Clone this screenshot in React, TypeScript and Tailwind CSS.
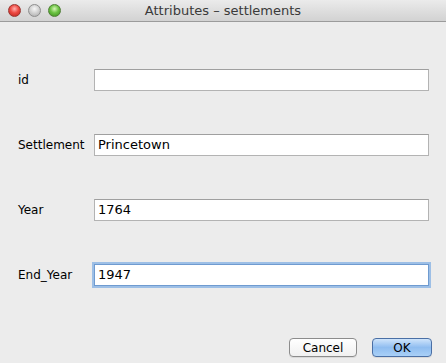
import { FunctionComponent } from "react";

type Field = { label: string; value: string; focused?: boolean };

const fields: Field[] = [
  { label: "id", value: "" },
  { label: "Settlement", value: "Princetown" },
  { label: "Year", value: "1764" },
  { label: "End_Year", value: "1947", focused: true },
];

const Light: FunctionComponent<{ kind: "red" | "grey" | "green" }> = ({ kind }) => {
  const cls =
    kind === "red"
      ? "bg-[radial-gradient(circle_at_50%_35%,#ffb3b0_0%,#ee4b44_45%,#b8211c_100%)] border-[#9a3530]"
      : kind === "green"
      ? "bg-[radial-gradient(circle_at_50%_35%,#d8f5b8_0%,#6cc443_45%,#3c8a1e_100%)] border-[#4e7f34]"
      : "bg-[radial-gradient(circle_at_50%_35%,#f7f7f7_0%,#cfcfcf_50%,#a7a7a7_100%)] border-[#8e8e8e]";
  return <span className={`h-[13px] w-[13px] rounded-full border ${cls}`} />;
};

const App: FunctionComponent = () => {
  return (
    <div className="flex h-[363px] w-[446px] flex-col bg-[#ececec] font-['DejaVu_Sans',sans-serif] text-black">
      <div className="relative flex h-[22px] items-center justify-center border-b border-[#9b9b9b] bg-gradient-to-b from-[#ebebeb] to-[#d2d2d2]">
        <div className="absolute left-[8px] top-[4px] flex gap-[7px]">
          <Light kind="red" />
          <Light kind="grey" />
          <Light kind="green" />
        </div>
        <span className="text-[13px] text-[#3a3a3a]">Attributes – settlements</span>
      </div>

      <div className="flex flex-col gap-[43px] pl-[18px] pr-[17px] pt-[47px]">
        {fields.map((f, i) => (
          <div key={i} className="flex items-center">
            <span className="w-[76px] text-[12px]">{f.label}</span>
            <div
              className={`flex h-[22px] flex-1 items-center bg-white pl-[3px] text-[13px] ${
                f.focused
                  ? "border border-[#6f9bd0] shadow-[0_0_0_2px_#9dbfe6]"
                  : "border border-[#b3b3b3] border-t-[#9f9f9f]"
              }`}
            >
              {f.value}
            </div>
          </div>
        ))}
      </div>

      <div className="mt-[52px] flex justify-end gap-[15px] pr-[14px]">
        <button className="h-[19px] w-[68px] rounded-[4px] border border-[#8c8c8c] bg-gradient-to-b from-white to-[#f0f0f0] text-[12px] shadow-[0_1px_0_rgba(0,0,0,0.08)]">
          Cancel
        </button>
        <button className="h-[19px] w-[60px] rounded-[4px] border border-[#4a6fa5] bg-gradient-to-b from-[#cfe4fb] via-[#8fbdf0] to-[#a9d0f7] text-[12px] shadow-[0_1px_0_rgba(0,0,0,0.08)]">
          OK
        </button>
      </div>
    </div>
  );
};

export default App;
